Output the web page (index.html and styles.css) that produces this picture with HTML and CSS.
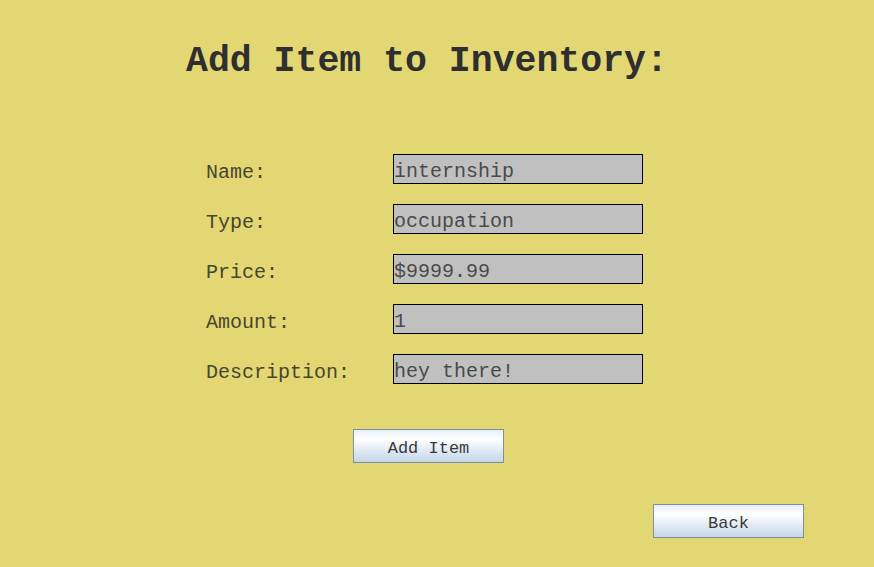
FILE: index.html
```html
<!DOCTYPE html>
<html>
<head>
<meta charset="utf-8">
<link rel="stylesheet" href="styles.css">
</head>
<body>
<div class="page">
  <h1 class="title">Add Item to Inventory:</h1>
  <form class="form">
    <div class="row"><label class="label">Name:</label><input class="field" value="internship"></div>
    <div class="row"><label class="label">Type:</label><input class="field" value="occupation"></div>
    <div class="row"><label class="label">Price:</label><input class="field" value="$9999.99"></div>
    <div class="row"><label class="label">Amount:</label><input class="field" value="1"></div>
    <div class="row"><label class="label">Description:</label><input class="field" value="hey there!"></div>
  </form>
  <div class="add-wrap"><button class="btn" type="button">Add Item</button></div>
  <div class="back-wrap"><button class="btn" type="button">Back</button></div>
</div>
</body>
</html>
```
FILE: styles.css
```css
html, body {
  margin: 0;
  padding: 0;
  background: #e3d774;
  width: 874px;
  height: 567px;
  overflow: hidden;
}
.page {
  display: flex;
  flex-direction: column;
  font-family: "Liberation Mono", "Courier New", monospace;
  color: #333;
}
.title {
  margin: 44px 0 0 186px;
  font-size: 36.5px;
  line-height: 36px;
  font-weight: bold;
  color: #2f2f2f;
}
.form {
  margin: 74px 0 0 206px;
  display: flex;
  flex-direction: column;
  gap: 20px;
}
.row {
  display: flex;
  height: 30px;
}
.label {
  width: 187px;
  font-size: 20px;
  line-height: 30px;
  padding-top: 4px;
  box-sizing: border-box;
  color: #47452f;
}
.field {
  width: 250px;
  height: 30px;
  box-sizing: border-box;
  border: 1px solid #000;
  background: #c0c0c0;
  font-family: "Liberation Mono", "Courier New", monospace;
  font-size: 20px;
  color: #4a4a4a;
  padding: 4px 0 0 0;
  margin: 0;
  outline: none;
}
.add-wrap {
  margin: 45px 0 0 353px;
  display: flex;
}
.back-wrap {
  margin: 41px 0 0 653px;
  display: flex;
}
.btn {
  width: 151px;
  height: 34px;
  box-sizing: border-box;
  border: 1px solid #7d8fa3;
  background: linear-gradient(to bottom, #e6eef7 0%, #ffffff 28%, #e3ecf5 60%, #c3d6e8 100%);
  font-family: "Liberation Mono", "Courier New", monospace;
  font-size: 17px;
  color: #3a3a3a;
  padding: 5px 0 0 0;
  margin: 0;
}
```
